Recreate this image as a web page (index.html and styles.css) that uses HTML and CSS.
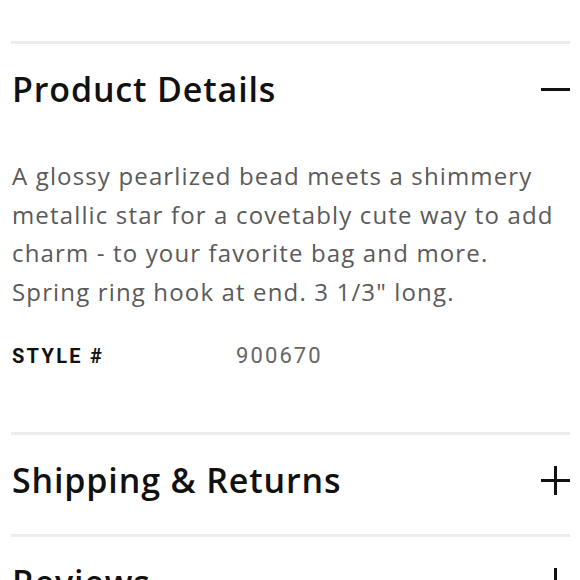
FILE: index.html
```html
<!DOCTYPE html>
<html>
<head>
	<meta charset="utf-8"/>
	<title>Product Details</title>
	<link rel="stylesheet" href="styles.css">
</head>
<body>
<div class="wrap">
	<div class="acc_item open">
		<div class="acc_head">
			<h2>Product Details</h2>
			<span class="ico">
				<svg width="29" height="29" viewBox="0 0 29 29"><rect x="0" y="13" width="29" height="3" fill="#111"/></svg>
			</span>
		</div>
		<div class="acc_body">
			<p class="desc">A glossy pearlized bead meets a shimmery metallic star for a covetably cute way to add charm - to your favorite bag and more. Spring ring hook at end. 3 1/3" long.</p>
			<div class="spec">
				<span class="spec_name">STYLE #</span>
				<span class="spec_val">900670</span>
			</div>
		</div>
	</div>
	<div class="acc_item">
		<div class="acc_head">
			<h2>Shipping &amp; Returns</h2>
			<span class="ico">
				<svg width="29" height="29" viewBox="0 0 29 29"><rect x="0" y="13" width="29" height="3" fill="#111"/><rect x="13" y="0" width="3" height="29" fill="#111"/></svg>
			</span>
		</div>
	</div>
	<div class="acc_item">
		<div class="acc_head">
			<h2>Reviews</h2>
			<span class="ico">
				<svg width="29" height="29" viewBox="0 0 29 29"><rect x="0" y="13" width="29" height="3" fill="#111"/><rect x="13" y="0" width="3" height="29" fill="#111"/></svg>
			</span>
		</div>
	</div>
</div>
</body>
</html>
```

FILE: styles.css
```css
/* =====reset===== */
body, div, span, h2, p { padding: 0; margin: 0; }

/* =====public===== */
body { background: #fff; color: #111; font-family: "Open Sans", "Liberation Sans", sans-serif; }
.wrap { padding: 41px 10px 0 11px; }

/* =====accordion===== */
.acc_item { border-top: 3px solid #ededed; padding-bottom: 9px; }
.acc_item.open { padding-bottom: 61px; }
.acc_head { height: 90px; display: flex; align-items: center; justify-content: space-between; padding-left: 1px; }
.acc_head h2 { font-size: 34px; font-weight: 600; line-height: 40px; letter-spacing: 0.85px; color: #111; }
.acc_head .ico { width: 29px; height: 29px; display: block; }
.acc_head .ico svg { display: block; }

.acc_body { padding: 23px 0 0 1px; }
.desc { font-size: 24px; line-height: 38.5px; color: #5a5a5a; letter-spacing: 1.15px; }
.spec { display: grid; grid-template-columns: 224px 1fr; margin-top: 30px; line-height: 30px; }
.spec_name { font-family: Roboto, "Liberation Sans", sans-serif; font-size: 20px; font-weight: 700; letter-spacing: 2.3px; color: #111; }
.spec_val { font-family: Roboto, "Liberation Sans", sans-serif; font-size: 22px; letter-spacing: 2.1px; color: #666; }
```
